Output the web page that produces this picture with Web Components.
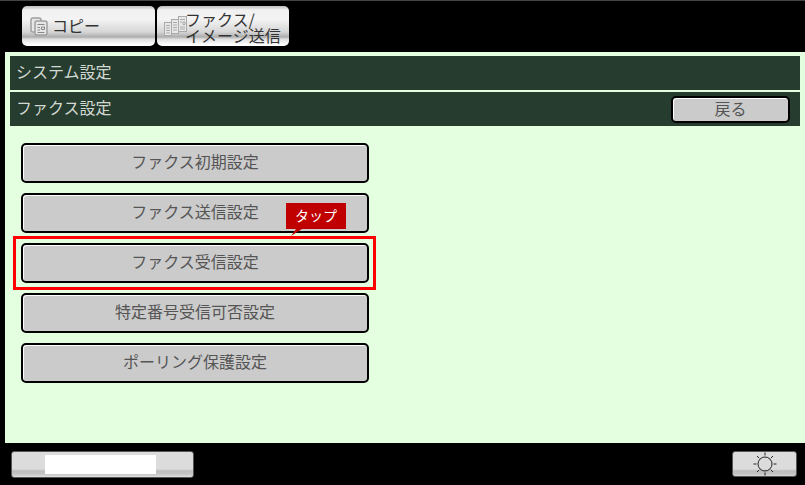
<!DOCTYPE html>
<html lang="ja">
<head>
<meta charset="utf-8">
<title>ファクス設定</title>
<style>
  html, body { margin: 0; height: 100%; background: #000; }
  body { font-family: "Noto Sans CJK JP", "Liberation Sans", sans-serif; }
</style>
</head>
<body>
<panel-screen>
  <mode-tab slot="tabs" icon="copy">コピー</mode-tab>
  <mode-tab slot="tabs" icon="fax">ファクス/<br>イメージ送信</mode-tab>

  <title-bar slot="bars">システム設定</title-bar>
  <title-bar slot="bars">ファクス設定<setting-button slot="action" small>戻る</setting-button></title-bar>

  <setting-button>ファクス初期設定</setting-button>
  <setting-button>ファクス送信設定</setting-button>
  <tap-mark><setting-button>ファクス受信設定</setting-button></tap-mark>
  <setting-button>特定番号受信可否設定</setting-button>
  <setting-button>ポーリング保護設定</setting-button>

  <foot-button slot="foot-left" wide><span style="display:block;width:111px;height:19px;margin-right:5px;background:#fff"></span></foot-button>
  <foot-button slot="foot-right">
    <svg width="26" height="26" viewBox="0 0 26 26" fill="none" stroke="#222" stroke-width="1">
      <circle cx="13" cy="13" r="7"/>
      <path d="M13 1.5v3M13 21.500v3M1.500 13h3M21.500 13h3M5 5l2.200 2.200M18.800 18.800L21 21M21 5l-2.200 2.200M7.200 18.800L5 21"/>
    </svg>
  </foot-button>
</panel-screen>

<script>
class PanelScreen extends HTMLElement {
  constructor() {
    super()
    this.attachShadow({ mode: 'open' })
    this.shadowRoot.innerHTML = `
      <style>
        :host { display: flex; flex-direction: column; width: 805px; height: 485px; background: #000; overflow: hidden; }
        .tabs { display: flex; gap: 2px; height: 52px; box-sizing: border-box; padding: 5px 0 0 22px; border-top: 1px solid #444; }
        .main { flex: 1; margin-left: 5px; background: #e3ffdf; padding: 4px 5px 0 5px; }
        .bars { display: flex; flex-direction: column; gap: 2px; }
        .list { display: flex; flex-direction: column; gap: 10px; width: 348px; margin: 17px 0 0 11px; }
        .foot { display: flex; justify-content: space-between; height: 42px; box-sizing: border-box; padding: 8px 8px 0 11px; }
      </style>
      <div class="tabs"><slot name="tabs"></slot></div>
      <div class="main">
        <div class="bars"><slot name="bars"></slot></div>
        <div class="list"><slot></slot></div>
      </div>
      <div class="foot"><slot name="foot-left"></slot><slot name="foot-right"></slot></div>
    `
  }
}

const tabIcons = {
  copy: `<svg width="18" height="19" viewBox="0 0 18 19" fill="#e6e6e6" stroke="#a0a0a0" stroke-width="1.500">
      <rect x="1" y="1" width="10" height="14" rx="2"/>
      <rect x="5" y="4" width="12" height="14" rx="2"/>
      <path d="M7.500 7.500h7M7.500 10.500h2.500M11.500 10h3v2.500h-3zM7.500 13h2.500M7.500 15.500h7" stroke-width="1" stroke="#888"/>
    </svg>`,
  fax: `<svg width="23" height="20" viewBox="0 0 23 20" fill="#e8e8e8" stroke="#aaa" stroke-width="1">
      <rect x="0.500" y="6.500" width="7" height="13"/>
      <rect x="7.500" y="3.500" width="7" height="14"/>
      <rect x="14.500" y="0.500" width="8" height="15"/>
      <path d="M2 9.500h4M2 12h4M2 14.500h4M2 17h4M9 6.500h4M9 9h4M9 11.500h4M9 14h4M16 3.500h5M16 6h2M19 6h2v2.500h-2zM16 11h5M16 13h5"/>
    </svg>`
}

class ModeTab extends HTMLElement {
  constructor() {
    super()
    this.attachShadow({ mode: 'open' })
    this.shadowRoot.innerHTML = `
      <style>
        :host { display: flex; align-items: center; width: 133px; height: 40px; box-sizing: border-box; padding-left: 8px; gap: 4px;
          border-radius: 5px; color: #333; font-size: 16px; line-height: 16px; white-space: nowrap;
          background: linear-gradient(#bdbdbd 0, #f0f0f0 4px, #f4f4f4 13px, #d6d6d6 26px, #adadad 31px, #dedede 33px, #fff 39px); }
        :host([icon="fax"]) { padding-left: 7px; gap: 0; width: 132px; }
        .icon { display: flex; flex: none; }
        .label { position: relative; top: -1px; }
        :host([icon="fax"]) .label { top: 1px; left: -2px; }
      </style>
      <span class="icon">${tabIcons[this.getAttribute('icon')]}</span>
      <span class="label"><slot></slot></span>
    `
  }
}

class TitleBar extends HTMLElement {
  constructor() {
    super()
    this.attachShadow({ mode: 'open' })
    this.shadowRoot.innerHTML = `
      <style>
        :host { display: flex; align-items: center; justify-content: space-between; height: 34px; box-sizing: border-box;
          padding: 0 10px 0 6px; background: #263c2e; color: #d2d8d2; font-size: 16px; }
        span { position: relative; top: -2px; }
      </style>
      <span><slot></slot></span>
      <slot name="action"></slot>
    `
  }
}

class SettingButton extends HTMLElement {
  constructor() {
    super()
    this.attachShadow({ mode: 'open' })
    this.shadowRoot.innerHTML = `
      <style>
        :host { display: flex; align-items: center; justify-content: center; height: 40px; box-sizing: border-box;
          padding-bottom: 4px; border: 2px solid #000; border-radius: 5px; background: #cbcbcb; color: #555;
          box-shadow: inset 1px 1px 0 #fff; font-size: 16px; }
        :host([small]) { width: 119px; height: 27px; padding-bottom: 2px; }
      </style>
      <slot></slot>
    `
  }
}

class TapMark extends HTMLElement {
  constructor() {
    super()
    this.attachShadow({ mode: 'open' })
    this.shadowRoot.innerHTML = `
      <style>
        :host { display: block; position: relative; }
        .frame { position: absolute; inset: -7px -7px -7px -8px; border: 3px solid #f00; pointer-events: none; }
        .tip { position: absolute; left: 265px; top: -40px; width: 60px; height: 25px; padding-bottom: 1px; background: #c00000; color: #fff;
          font-size: 14px; line-height: 24px; text-align: center; }
        .tail { position: absolute; left: 269px; top: -14px; display: block; }
      </style>
      <slot></slot>
      <div class="frame"></div>
      <div class="tip">タップ</div>
      <svg class="tail" width="12" height="8" viewBox="0 0 12 8"><path d="M6 0h6L1 7z" fill="#c00000"/></svg>
    `
  }
}

class FootButton extends HTMLElement {
  constructor() {
    super()
    this.attachShadow({ mode: 'open' })
    this.shadowRoot.innerHTML = `
      <style>
        :host { display: flex; align-items: flex-start; justify-content: center; width: 65px; height: 26px; box-sizing: border-box;
          padding-top: 0; border-radius: 3px; border: 1px solid #555; overflow: hidden;
          background: linear-gradient(#dcdcdc 0, #dcdcdc 17px, #bdbdbd 19px, #c4c4c4 22px, #e0e0e0 25px); }
        :host([wide]) { width: 183px; height: 27px; padding-top: 3px; }
        :host(:not([wide])) { align-items: center; }
      </style>
      <slot></slot>
    `
  }
}

customElements.define('panel-screen', PanelScreen)
customElements.define('mode-tab', ModeTab)
customElements.define('title-bar', TitleBar)
customElements.define('setting-button', SettingButton)
customElements.define('tap-mark', TapMark)
customElements.define('foot-button', FootButton)
</script>
</body>
</html>
